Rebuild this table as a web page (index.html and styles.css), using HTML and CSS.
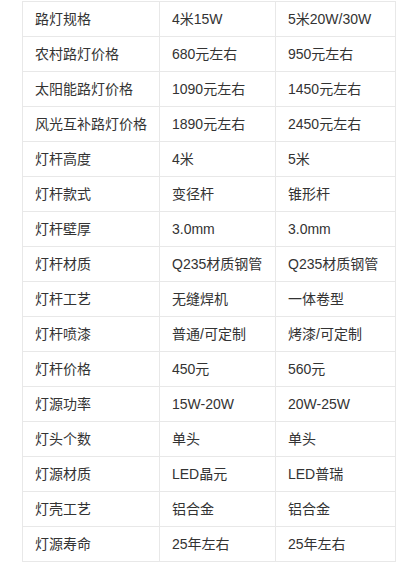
FILE: index.html
```html
<!DOCTYPE html>
<html lang="zh-CN">
<head>
<meta charset="utf-8">
<title>路灯价格表</title>
<link rel="stylesheet" href="styles.css">
</head>
<body>
<table class="spec">
  <colgroup><col class="c1"><col class="c2"><col class="c3"></colgroup>
  <tbody>
    <tr><td>路灯规格</td><td>4米15W</td><td>5米20W/30W</td></tr>
    <tr><td>农村路灯价格</td><td>680元左右</td><td>950元左右</td></tr>
    <tr><td>太阳能路灯价格</td><td>1090元左右</td><td>1450元左右</td></tr>
    <tr><td>风光互补路灯价格</td><td>1890元左右</td><td>2450元左右</td></tr>
    <tr><td>灯杆高度</td><td>4米</td><td>5米</td></tr>
    <tr><td>灯杆款式</td><td>变径杆</td><td>锥形杆</td></tr>
    <tr><td>灯杆壁厚</td><td>3.0mm</td><td>3.0mm</td></tr>
    <tr><td>灯杆材质</td><td>Q235材质钢管</td><td>Q235材质钢管</td></tr>
    <tr><td>灯杆工艺</td><td>无缝焊机</td><td>一体卷型</td></tr>
    <tr><td>灯杆喷漆</td><td>普通/可定制</td><td>烤漆/可定制</td></tr>
    <tr><td>灯杆价格</td><td>450元</td><td>560元</td></tr>
    <tr><td>灯源功率</td><td>15W-20W</td><td>20W-25W</td></tr>
    <tr><td>灯头个数</td><td>单头</td><td>单头</td></tr>
    <tr><td>灯源材质</td><td>LED晶元</td><td>LED普瑞</td></tr>
    <tr><td>灯壳工艺</td><td>铝合金</td><td>铝合金</td></tr>
    <tr><td>灯源寿命</td><td>25年左右</td><td>25年左右</td></tr>
  </tbody>
</table>
</body>
</html>
```
FILE: styles.css
```css
html, body {
  margin: 0;
  padding: 0;
  background: #ffffff;
}
body {
  padding: 1px 0 0 22px;
  font-family: "Liberation Sans", "Noto Sans CJK SC", sans-serif;
  font-size: 14px;
  color: #333333;
}
.spec {
  border-collapse: collapse;
  table-layout: fixed;
  width: 373px;
}
.spec .c1 { width: 137px; }
.spec .c2 { width: 116px; }
.spec .c3 { width: 120px; }
.spec td {
  border: 1px solid #e8e8e8;
  padding: 7px 11px 7px 12px;
  line-height: 20px;
  height: 20px;
  white-space: nowrap;
  vertical-align: middle;
}
```
